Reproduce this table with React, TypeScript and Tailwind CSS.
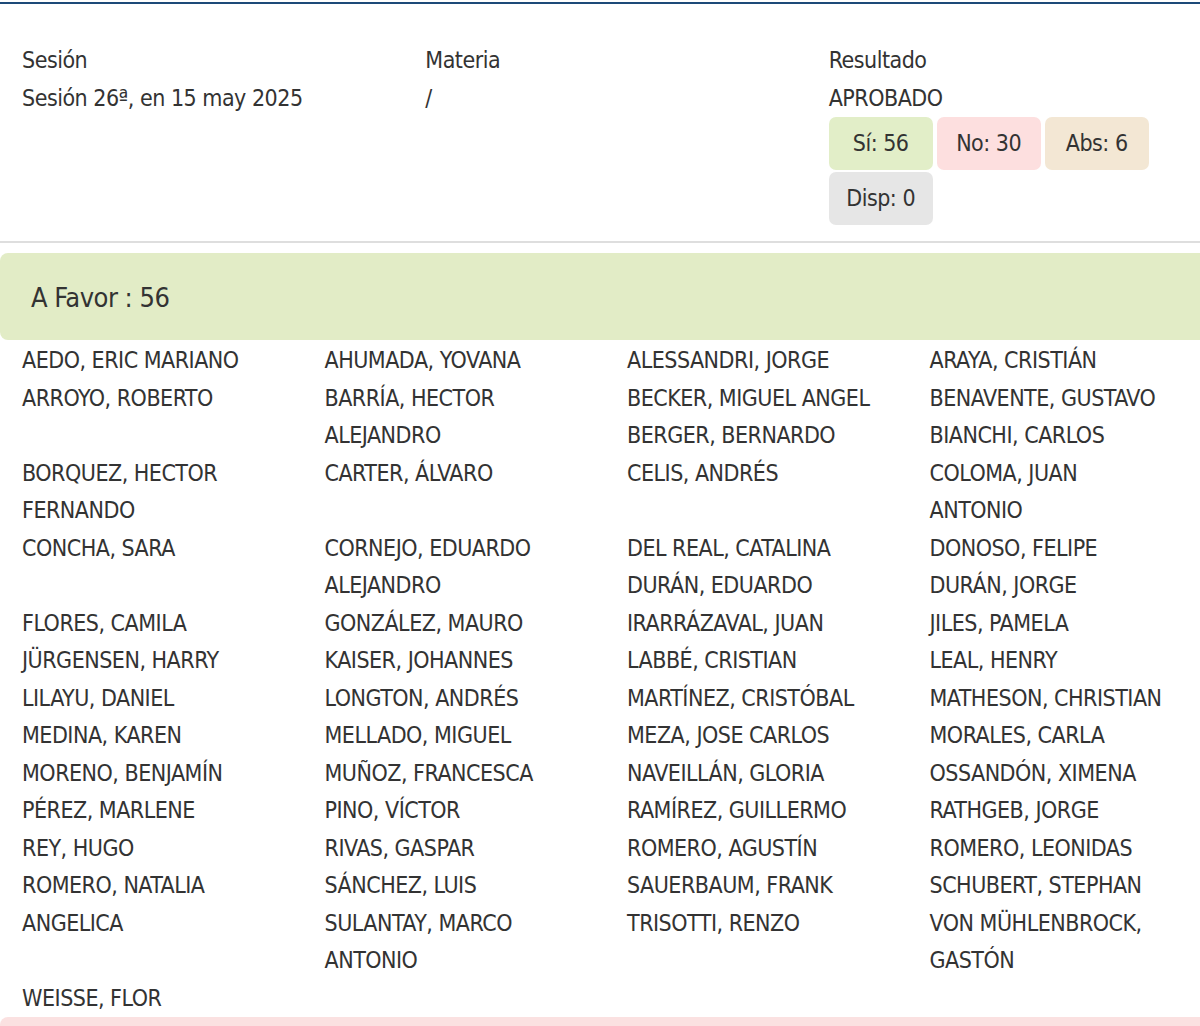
import React from 'react';

const favor: string[][] = [
  ["AEDO, ERIC MARIANO"], ["AHUMADA, YOVANA"], ["ALESSANDRI, JORGE"], ["ARAYA, CRISTIÁN"],
  ["ARROYO, ROBERTO"], ["BARRÍA, HECTOR", "ALEJANDRO"], ["BECKER, MIGUEL ANGEL"], ["BENAVENTE, GUSTAVO"],
  ["BERGER, BERNARDO"], ["BIANCHI, CARLOS"], ["BORQUEZ, HECTOR", "FERNANDO"], ["CARTER, ÁLVARO"],
  ["CELIS, ANDRÉS"], ["COLOMA, JUAN", "ANTONIO"], ["CONCHA, SARA"], ["CORNEJO, EDUARDO", "ALEJANDRO"],
  ["DEL REAL, CATALINA"], ["DONOSO, FELIPE"], ["DURÁN, EDUARDO"], ["DURÁN, JORGE"],
  ["FLORES, CAMILA"], ["GONZÁLEZ, MAURO"], ["IRARRÁZAVAL, JUAN"], ["JILES, PAMELA"],
  ["JÜRGENSEN, HARRY"], ["KAISER, JOHANNES"], ["LABBÉ, CRISTIAN"], ["LEAL, HENRY"],
  ["LILAYU, DANIEL"], ["LONGTON, ANDRÉS"], ["MARTÍNEZ, CRISTÓBAL"], ["MATHESON, CHRISTIAN"],
  ["MEDINA, KAREN"], ["MELLADO, MIGUEL"], ["MEZA, JOSE CARLOS"], ["MORALES, CARLA"],
  ["MORENO, BENJAMÍN"], ["MUÑOZ, FRANCESCA"], ["NAVEILLÁN, GLORIA"], ["OSSANDÓN, XIMENA"],
  ["PÉREZ, MARLENE"], ["PINO, VÍCTOR"], ["RAMÍREZ, GUILLERMO"], ["RATHGEB, JORGE"],
  ["REY, HUGO"], ["RIVAS, GASPAR"], ["ROMERO, AGUSTÍN"], ["ROMERO, LEONIDAS"],
  ["ROMERO, NATALIA", "ANGELICA"], ["SÁNCHEZ, LUIS"], ["SAUERBAUM, FRANK"], ["SCHUBERT, STEPHAN"],
  ["SULANTAY, MARCO", "ANTONIO"], ["TRISOTTI, RENZO"], ["VON MÜHLENBROCK,", "GASTÓN"], ["WEISSE, FLOR"],
];

const badges = [
  { label: "Sí: 56", cls: "bg-[#e2eec8]" },
  { label: "No: 30", cls: "bg-[#fddfdf]" },
  { label: "Abs: 6", cls: "bg-[#f3e7d4]" },
  { label: "Disp: 0", cls: "bg-[#e6e6e6]" },
];

export default function App() {
  return (
    <div
      className="w-[1200px] min-h-[1026px] overflow-hidden bg-white text-[#333] text-[23px] leading-[37.5px] tracking-[-0.5px]"
      style={{ fontFamily: '"DejaVu Sans Condensed", "Liberation Sans", sans-serif' }}
    >
      <div className="w-[1210px] pt-[2px]">
        {/* Cabecera de la votación */}
        <div className="border-t-[2px] border-[#1d4a78] pt-[38px] pb-[16px] border-b-[2px] border-b-[#dedede] flow-root">
          <div className="float-left w-1/3 pl-[22px]">
            <div>Sesión</div>
            <div>Sesión 26ª, en 15 may 2025</div>
          </div>
          <div className="float-left w-1/3 pl-[22px]">
            <div>Materia</div>
            <div>/</div>
          </div>
          <div className="float-left w-1/3 pl-[22px]">
            <div>Resultado</div>
            <div>APROBADO</div>
            <div className="flex flex-wrap gap-x-[4px] gap-y-[2px] pr-[22px]">
              {badges.map((b) => (
                <span
                  key={b.label}
                  className={`w-[104px] h-[53px] rounded-[7px] flex items-center justify-center ${b.cls}`}
                >
                  {b.label}
                </span>
              ))}
            </div>
          </div>
        </div>

        {/* A favor */}
        <div className="mt-[10px] h-[87px] rounded-[8px] bg-[#e2ecc6] flex items-center pl-[31px] pt-[2px] text-[27px]">
          A Favor : 56
        </div>
        <div className="flow-root pt-[2px]">
          {favor.map((lines) => (
            <div key={lines.join(" ")} className="float-left w-1/4 pl-[22px]">
              {lines.map((l) => (
                <div key={l} className="whitespace-nowrap">{l}</div>
              ))}
            </div>
          ))}
        </div>

        {/* En contra */}
        <div className="h-[20px] rounded-t-[8px] bg-[#fbe1e1]"></div>
      </div>
    </div>
  );
}
